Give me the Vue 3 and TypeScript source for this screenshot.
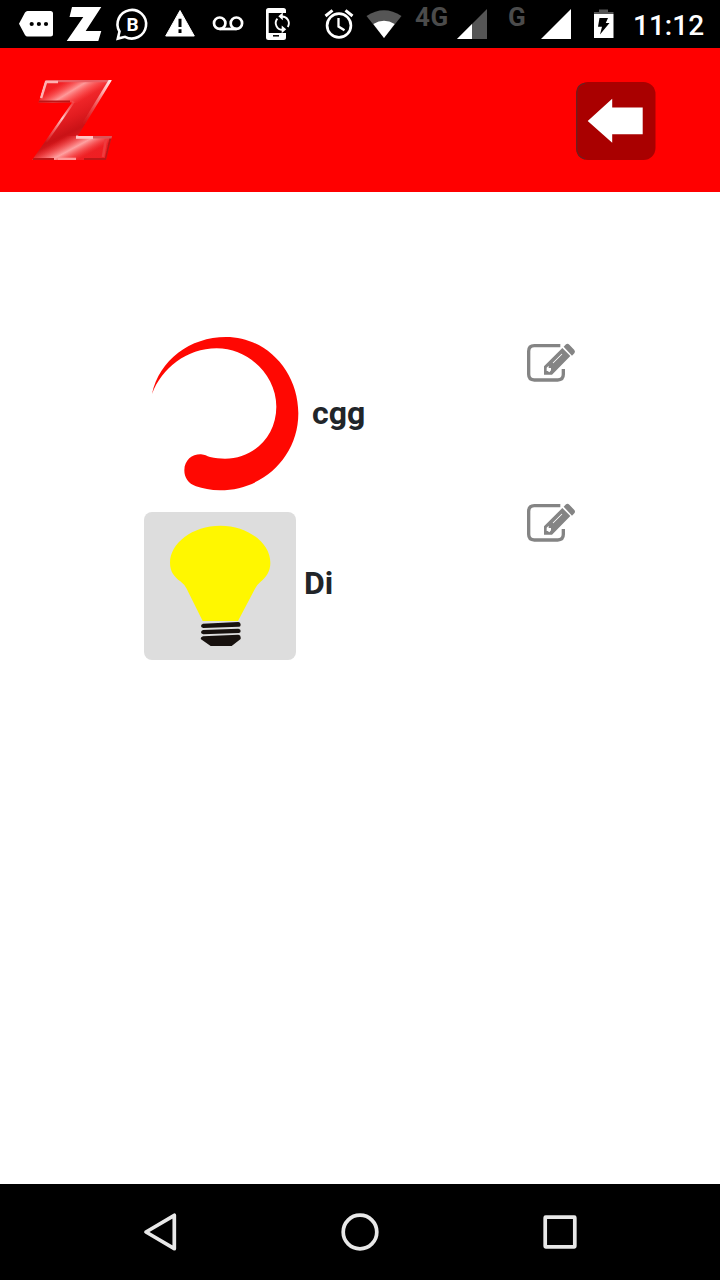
<script setup lang="ts">
interface Entry {
  name: string
  picture: 'swirl' | 'bulb'
}

const entries: Entry[] = [
  { name: 'cgg', picture: 'swirl' },
  { name: 'Di', picture: 'bulb' },
]
</script>

<template>
  <div class="screen">
    <div class="status">
      <div class="notifications">
        <svg viewBox="0 0 60 48" width="60" height="48">
          <path d="M27.5 11H50.5Q53 11 53 13.500V34Q53 36.500 50.500 36.500H27.500Q26 36.500 25 35L19 23.800 25 12.500Q26 11 27.500 11Z" fill="#fff" />
          <g fill="#000"><circle cx="31.700" cy="24" r="2.100" /><circle cx="38.900" cy="24" r="2.100" /><circle cx="46" cy="24" r="2.100" /></g>
        </svg>
        <svg viewBox="60 0 48 48" width="48" height="48">
          <path d="M72 7H101.300L85.700 31H101.300L98.300 41H66.700L83.300 17H69.500Z" fill="#fff" />
        </svg>
        <svg viewBox="108 0 48 48" width="48" height="48">
          <path d="M119.500 31.500A14.300 14.300 0 1 1 125 36.800L117.800 38.600Z" fill="none" stroke="#fff" stroke-width="2.600" />
          <text x="132.500" y="30.500" text-anchor="middle" class="badge-letter">B</text>
        </svg>
        <svg viewBox="156 0 48 48" width="48" height="48">
          <path d="M180 10.500 194.300 36H165.700Z" fill="#fff" stroke="#fff" stroke-linejoin="round" />
          <path d="M178.500 18.700H181.500V27H178.500ZM178.500 29.300H181.500V33H178.500Z" fill="#000" />
        </svg>
        <svg viewBox="204 0 48 48" width="48" height="48" fill="none" stroke="#fff" stroke-width="2.700">
          <circle cx="219.700" cy="23.200" r="5.700" /><circle cx="236.400" cy="23.200" r="5.700" /><path d="M219.700 29H236.400" />
        </svg>
        <svg viewBox="252 0 48 48" width="48" height="48">
          <path d="M268.500 8H283.500Q286 8 286 10.500V13H268.700V33H286V37.500Q286 40 283.500 40H268.500Q266 40 266 37.500V10.500Q266 8 268.500 8Z" fill="#fff" />
          <path d="M273 35.800H279" stroke="#000" stroke-width="1.500" />
          <g fill="none" stroke="#fff" stroke-width="1.900"><path d="M281.500 16.600A6.800 6.800 0 0 1 287.800 27" /><path d="M277.400 18.600A6.800 6.800 0 0 0 283 29.800" /></g>
          <path d="M282.800 12.500V20.200L278.300 16.300ZM281.700 25.500V33.200L286.200 29.300Z" fill="#fff" />
        </svg>
      </div>
      <div class="system">
        <svg viewBox="315 0 48 48" width="48" height="48" fill="none" stroke="#fff" stroke-width="2.700">
          <circle cx="339" cy="25.500" r="11.900" /><path d="M325.500 16 332.500 10.400M345.500 10.400 352.500 16" stroke-width="3" /><path d="M338.500 18V26.500L344.500 30.300" stroke-width="2.300" />
        </svg>
        <svg viewBox="363 0 52 48" width="52" height="48">
          <path d="M366.500 16Q384 4.500 401.500 16L384 38Z" fill="#555" /><path d="M373.300 24Q384 17.500 394.700 24L384 38Z" fill="#fff" />
        </svg>
        <span class="network">4G</span>
        <svg class="signal-one" viewBox="0 0 30 30" width="30" height="30">
          <path d="M0 30 30 0V30Z" fill="#555" /><path d="M0 30 15 15V30Z" fill="#fff" />
        </svg>
        <span class="network second">G</span>
        <svg class="signal-two" viewBox="0 0 30 30" width="30" height="30"><path d="M0 30 30 0V30Z" fill="#fff" /></svg>
        <svg class="battery" viewBox="593 0 22 48" width="22" height="48">
          <path d="M599 9.500H608V12H613.500V14H594V12H599Z" fill="#555" /><path d="M594 14H613.500V38H594Z" fill="#fff" /><path d="M599.500 18H608L605.800 23H609.500L600 34.500 602 26.700H598Z" fill="#000" />
        </svg>
        <time class="clock">11:12</time>
      </div>
    </div>

    <header class="header">
      <svg class="logo" viewBox="32 80 80 80" width="80" height="80">
        <defs>
          <clipPath id="letter"><path d="M45 80H112L78 136H112L106 160H32L72 102.500H38.500Z" /></clipPath>
          <filter id="soften" filterUnits="userSpaceOnUse" x="28" y="76" width="90" height="90"><feGaussianBlur stdDeviation=".7" /></filter>
          <linearGradient id="face" gradientUnits="userSpaceOnUse" x1="52" y1="78" x2="92" y2="164">
            <stop offset="0" stop-color="#f01c20" /><stop offset=".28" stop-color="#f52a2d" /><stop offset=".46" stop-color="#e21c20" /><stop offset=".6" stop-color="#c91216" /><stop offset=".76" stop-color="#ec2226" /><stop offset="1" stop-color="#f01e22" />
          </linearGradient>
          <linearGradient id="shine-top" gradientUnits="userSpaceOnUse" x1="66" y1="80" x2="82" y2="106">
            <stop offset="0" stop-color="#ff5555" stop-opacity="0" /><stop offset=".4" stop-color="#ffa0a0" stop-opacity=".95" /><stop offset=".85" stop-color="#ff5555" stop-opacity="0" />
          </linearGradient>
          <linearGradient id="shine-bottom" gradientUnits="userSpaceOnUse" x1="66" y1="136" x2="80" y2="162">
            <stop offset="0" stop-color="#ff5555" stop-opacity="0" /><stop offset=".48" stop-color="#ffa8a8" stop-opacity=".95" /><stop offset=".9" stop-color="#ff5555" stop-opacity="0" />
          </linearGradient>
          <linearGradient id="left-glint" gradientUnits="userSpaceOnUse" x1="72" y1="102" x2="42" y2="147">
            <stop offset="0" stop-color="#ff9999" stop-opacity=".2" /><stop offset=".35" stop-color="#ffc8c8" /><stop offset=".9" stop-color="#ff7777" stop-opacity="0" />
          </linearGradient>
          <linearGradient id="right-glint" gradientUnits="userSpaceOnUse" x1="111" y1="81" x2="84" y2="126">
            <stop offset="0" stop-color="#ffe4e4" /><stop offset=".25" stop-color="#ffadad" /><stop offset="1" stop-color="#e33" stop-opacity="0" />
          </linearGradient>
        </defs>
        <g clip-path="url(#letter)">
          <path d="M45 80H112L78 136H112L106 160H32L72 102.500H38.500Z" fill="url(#face)" />
          <path d="M45 80H112L98 103H38Z" fill="url(#shine-top)" />
          <path d="M44 136H112L106 160H32Z" fill="url(#shine-bottom)" />
          <g fill="none" filter="url(#soften)" stroke-width="2.600">
            <path d="M38 101.800H70M33 159.200H54M84 159.200H106L111 137" stroke="#bd1519" />
            <path d="M46 81H108" stroke="#e96065" />
            <path d="M106 139 103 157" stroke="#ef3a3d" />
            <path d="M73.500 101.500 35 157.500" stroke="url(#left-glint)" stroke-width="3" />
            <path d="M111 80 79 132.500" stroke="url(#right-glint)" stroke-width="4.200" />
            <path d="M58 82H46L41 98" stroke="#ffb1b1" />
            <path d="M58 159H76" stroke="#ff9a9a" />
            <path d="M76 137.200H93" stroke="#ffc4c4" stroke-width="3.200" />
            <path d="M93 137.200H112" stroke="#d95559" />
          </g>
        </g>
      </svg>
      <svg class="back" viewBox="576 82 80 78" width="80" height="78">
        <rect x="576" y="82" width="79.500" height="78" rx="12" fill="#a90000" />
        <path d="M585 83.300Q576.700 84 576.700 94V148Q576.700 157 585 159" fill="none" stroke="#6b2020" stroke-width="1.200" />
        <path d="M587.700 121 612.200 98.800V107.500H642.700V134.300H612.200V142.800Z" fill="#fff" />
      </svg>
    </header>

    <main class="list">
      <div v-for="entry in entries" :key="entry.name" class="entry" :class="entry.picture">
        <svg v-if="entry.picture === 'swirl'" class="picture" viewBox="12 24 480 480" width="160" height="160">
          <path d="M36 207C58 105 150 36 258 36C380 36 475 140 475 265C475 395 370 496 240 496C212 496 188 491 168 484C145 476 133 458 133 436C133 404 158 387 183 388C195 389 200 393 210 396C225 400 240 401 255 401C340 401 409 335 409 245C409 150 325 70 230 70C140 70 65 130 36 207Z" fill="#ff0802" />
        </svg>
        <svg v-else class="picture" viewBox="27 36 456 444" width="152" height="148">
          <rect x="27" y="36" width="456" height="444" rx="24" fill="#ddd" />
          <path d="M256 77C340 77 406 130 406 188C406 215 393 232 376 246Q366 254 360 266L309 363H203L155 266Q149 254 136 244C118 230 105 215 105 188C105 130 172 77 256 77Z" fill="#fff700" />
          <g fill="#17110e"><path d="M204 371 310 366Q317 367 317 374T311 380L205 384Q198 383 198 378T204 371ZM204 390 310 386Q317 387 317 393T311 399L205 403Q198 402 198 397T204 390ZM204 409 310 404Q317 405 317 412V417L290 438H227L197 417Q197 411 204 409Z" /></g>
        </svg>
        <strong class="name">{{ entry.name }}</strong>
        <svg class="edit" viewBox="36 39 147 120" width="49" height="40">
          <path d="M136 47H58Q41 47 41 64V133Q41 150 58 150H128Q145 150 145 133V117" fill="none" stroke="#848484" stroke-width="10" />
          <path d="M87 109 142 54 166 78 111 134H87ZM146 50 153 43Q158 39 163 44L178 60Q182 65 178 70L171 77Z" fill="#848484" />
          <path d="M95 113 101 107V114H108V121L103 127 98 123H95ZM113 98 140 71 142 73 115 100Z" fill="#fff" />
        </svg>
      </div>
    </main>

    <nav class="nav">
      <svg viewBox="0 0 40 40" width="40" height="40"><path d="M6 20 34.300 3.300V36.700Z" /></svg>
      <svg viewBox="0 0 40 40" width="40" height="40"><circle cx="20" cy="20" r="16.800" /></svg>
      <svg viewBox="0 0 40 40" width="40" height="40"><rect x="5.200" y="5.200" width="29.600" height="29.600" rx=".5" /></svg>
    </nav>
  </div>
</template>

<style>
body { margin: 0; background: #fff; }
</style>

<style scoped>
.screen {
  width: 720px;
  height: 1280px;
  display: flex;
  flex-direction: column;
  background: #fff;
  font-family: Roboto, sans-serif;
  overflow: hidden;
}
svg { display: block; flex: none; }
.status { display: flex; height: 48px; background: #000; flex: none; }
.notifications { display: flex; width: 315px; }
.system { display: flex; align-items: flex-start; }
.badge-letter { font: 700 19px Roboto, sans-serif; fill: #fff; }
.network { width: 42px; padding-top: 2px; font-size: 26px; line-height: 30px; font-weight: 700; color: #4b4b4b; letter-spacing: .6px; }
.signal-one { margin-top: 9px; }
.second { width: 33px; margin-left: 21px; }
.signal-two { margin-top: 9px; }
.battery { margin-left: 22px; }
.clock { margin-left: 18px; padding-top: 9px; color: #fff; font-size: 28px; line-height: 33px; font-weight: 500; }
.header {
  height: 144px;
  flex: none;
  box-sizing: border-box;
  padding: 32px 64px 0 32px;
  display: flex;
  justify-content: space-between;
  background: #f00;
}
.back { margin-top: 2px; }
.list { flex: 1; padding: 141px 144px 0; }
.entry { display: flex; align-items: flex-start; height: 171px; }
.swirl { height: 160px; margin-bottom: 19px; }
.bulb { height: 148px; }
.name { margin-left: 8px; color: #212529; font-size: 32px; line-height: 40px; font-weight: 700; }
.swirl .name { margin-top: 60px; }
.bulb .name { margin-top: 51px; }
.edit { margin-left: auto; margin-right: 0; margin-top: 10px; }
.bulb .edit { margin-top: -9px; }
.nav {
  height: 96px;
  flex: none;
  display: flex;
  align-items: center;
  justify-content: center;
  gap: 160px;
  background: #000;
}
.nav svg { fill: none; stroke: #e8e8e8; stroke-width: 3.7; stroke-linejoin: round; }
</style>
